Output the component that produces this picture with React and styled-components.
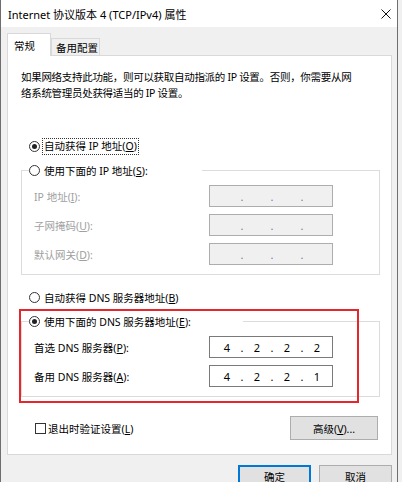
import React from "react";
import styled, { createGlobalStyle } from "styled-components";

/*--- 스타일 ---*/
const GlobalStyle = createGlobalStyle`
  html, body {
    margin: 0;
    padding: 0;
    background: #f0f0f0;
    overflow: hidden;
  }
  body {
    font-family: "Noto Sans", "Noto Sans CJK SC", sans-serif;
    font-size: 10.5px;
    color: #000;
  }
`;

const Window = styled.div`
  position: relative;
  width: 398px;
  height: 482px;
  box-sizing: border-box;
  border-left: 1px solid #6e6e6e;
  border-right: 1px solid #6e6e6e;
  background: #f0f0f0;
  overflow: hidden;
`;

const TitleBar = styled.div`
  height: 27px;
  box-sizing: border-box;
  padding: 0 6px 0 7px;
  background: #fff;
  display: flex;
  align-items: center;
  justify-content: space-between;
  font-size: 11px;
`;

const Body = styled.div`
  padding: 6px 0 0 6px;
`;

const Tabs = styled.div`
  position: relative;
  z-index: 1;
  display: flex;
  align-items: flex-end;
  height: 23px;
  margin-bottom: -1px;
`;

const Tab = styled.div`
  box-sizing: border-box;
  height: ${(p) => (p.$active ? "23px" : "17px")};
  width: ${(p) => (p.$active ? "44px" : "49px")};
  margin-bottom: ${(p) => (p.$active ? "0" : "1px")};
  padding-left: ${(p) => (p.$active ? "6px" : "4px")};
  display: flex;
  align-items: center;
  background: ${(p) => (p.$active ? "#fff" : "#f0f0f0")};
  border: 1px solid #d9d9d9;
  border-bottom: none;
`;

const Panel = styled.section`
  position: relative;
  width: 385px;
  box-sizing: border-box;
  padding: 13px 11px 14px 13px;
  background: #fff;
  border: 1px solid #d9d9d9;
`;

const Desc = styled.p`
  margin: 0;
  line-height: 16px;
  letter-spacing: -0.3px;
`;

const OptionRow = styled.div`
  display: flex;
  align-items: center;
  gap: 4px;
  height: 16px;
  margin: ${(p) => p.$top || 0}px 0 0 8px;
  white-space: nowrap;
`;

const RadioDot = styled.span`
  position: relative;
  width: 11px;
  height: 11px;
  box-sizing: border-box;
  border: 1px solid #333;
  border-radius: 50%;
  background: #fff;
  flex: none;
  &::after {
    content: "";
    display: ${(p) => (p.$checked ? "block" : "none")};
    position: absolute;
    left: 2px;
    top: 2px;
    width: 5px;
    height: 5px;
    border-radius: 50%;
    background: #222;
  }
`;

const FocusText = styled.span`
  outline: 1px dotted #333;
  outline-offset: 0;
  padding: 0 1px;
  margin-left: -1px;
  line-height: 15px;
`;

const Group = styled.fieldset`
  margin: 8px 0 0;
  padding: 0;
  min-width: 0;
  border: 1px solid #dcdcdc;
`;

const Legend = styled.legend`
  width: ${(p) => p.$width}px;
  margin-left: 7px;
  padding: 0;
  height: 16px;
  display: flex;
  align-items: center;
  gap: 4px;
  white-space: nowrap;
`;

const FieldGrid = styled.div`
  display: grid;
  grid-template-columns: 175px 124px;
  grid-auto-rows: 22px;
  row-gap: 7px;
  align-items: center;
  padding: 7px 0 9px 12px;
`;

const FieldLabel = styled.span`
  color: ${(p) => (p.$disabled ? "#a0a0a0" : "#000")};
  white-space: nowrap;
`;

const IpBox = styled.div`
  height: 22px;
  box-sizing: border-box;
  padding-left: 5px;
  display: flex;
  align-items: center;
  background: ${(p) => (p.$disabled ? "#f0f0f0" : "#fff")};
  border: 1px solid ${(p) => (p.$disabled ? "#adadad" : "#7a7a7a")};
  font-family: "Noto Sans", sans-serif;
  font-size: 11px;
`;

const Octet = styled.span`
  width: 24px;
  text-align: center;
`;

const Dot = styled.span`
  width: 6px;
  text-align: center;
  color: ${(p) => (p.$disabled ? "#7c7c9c" : "#000")};
`;

const Footer = styled.div`
  display: flex;
  align-items: center;
  justify-content: space-between;
  height: 24px;
  margin-top: 19px;
  padding: 0 2px 0 14px;
`;

const CheckRow = styled.label`
  display: flex;
  align-items: center;
  gap: 2px;
`;

const CheckBox = styled.span`
  width: 11px;
  height: 11px;
  box-sizing: border-box;
  border: 1px solid #333;
  background: #fff;
`;

const Button = styled.button`
  width: ${(p) => p.$width || 73}px;
  height: ${(p) => p.$height || 23}px;
  padding: 0;
  font-family: inherit;
  font-size: 10.5px;
  color: #000;
  background: #e1e1e1;
  border: 1px solid ${(p) => (p.$primary ? "#0078d7" : "#adadad")};
  box-shadow: ${(p) => (p.$primary ? "inset 0 0 0 1px #0078d7" : "none")};
`;

const Buttons = styled.div`
  display: flex;
  justify-content: flex-end;
  gap: 8px;
  width: 385px;
  padding-top: 10px;
`;

const Highlight = styled.div`
  position: absolute;
  left: 11px;
  top: 253px;
  width: 340px;
  height: 94px;
  box-sizing: border-box;
  border: 2px solid #e5262d;
  pointer-events: none;
`;

/*--- 출력 ---*/
const IpField = ({ value, disabled }) => {
  const parts = value ? value.split(".") : ["", "", "", ""];
  return (
    <IpBox $disabled={disabled}>
      {parts.map((p, i) => (
        <React.Fragment key={i}>
          {i > 0 && <Dot $disabled={disabled}>.</Dot>}
          <Octet>{p}</Octet>
        </React.Fragment>
      ))}
    </IpBox>
  );
};

const CloseIcon = () => (
  <svg width="10" height="10" viewBox="0 0 10 10">
    <path d="M0.5 0.5 L9.5 9.5 M9.5 0.5 L0.5 9.5" stroke="#111" strokeWidth="1" />
  </svg>
);

const App = () => {
  return (
    <Window>
      <GlobalStyle />
      <TitleBar>
        <span>Internet 协议版本 4 (TCP/IPv4) 属性</span>
        <CloseIcon />
      </TitleBar>
      <Body>
        <Tabs>
          <Tab $active>常规</Tab>
          <Tab>备用配置</Tab>
        </Tabs>
        <Panel>
          <Desc>
            如果网络支持此功能，则可以获取自动指派的 IP 设置。否则，你需要从网
            <br />
            络系统管理员处获得适当的 IP 设置。
          </Desc>

          <OptionRow $top={37}>
            <RadioDot $checked />
            <FocusText>
              自动获得 IP 地址(<u>O</u>)
            </FocusText>
          </OptionRow>

          <Group>
            <Legend $width={173}>
              <RadioDot />
              <span>
                使用下面的 IP 地址(<u>S</u>):
              </span>
            </Legend>
            <FieldGrid>
              <FieldLabel $disabled>
                IP 地址(<u>I</u>):
              </FieldLabel>
              <IpField disabled />
              <FieldLabel $disabled>
                子网掩码(<u>U</u>):
              </FieldLabel>
              <IpField disabled />
              <FieldLabel $disabled>
                默认网关(<u>D</u>):
              </FieldLabel>
              <IpField disabled />
            </FieldGrid>
          </Group>

          <OptionRow $top={14}>
            <RadioDot />
            <span>
              自动获得 DNS 服务器地址(<u>B</u>)
            </span>
          </OptionRow>

          <Group>
            <Legend $width={214}>
              <RadioDot $checked />
              <span>
                使用下面的 DNS 服务器地址(<u>E</u>):
              </span>
            </Legend>
            <FieldGrid>
              <FieldLabel>
                首选 DNS 服务器(<u>P</u>):
              </FieldLabel>
              <IpField value="4.2.2.2" />
              <FieldLabel>
                备用 DNS 服务器(<u>A</u>):
              </FieldLabel>
              <IpField value="4.2.2.1" />
            </FieldGrid>
          </Group>

          <Footer>
            <CheckRow>
              <CheckBox />
              <span>
                退出时验证设置(<u>L</u>)
              </span>
            </CheckRow>
            <Button $width={88} $height={24}>
              高级(<u>V</u>)...
            </Button>
          </Footer>

          <Highlight />
        </Panel>
        <Buttons>
          <Button $primary>确定</Button>
          <Button>取消</Button>
        </Buttons>
      </Body>
    </Window>
  );
};

export default App;
